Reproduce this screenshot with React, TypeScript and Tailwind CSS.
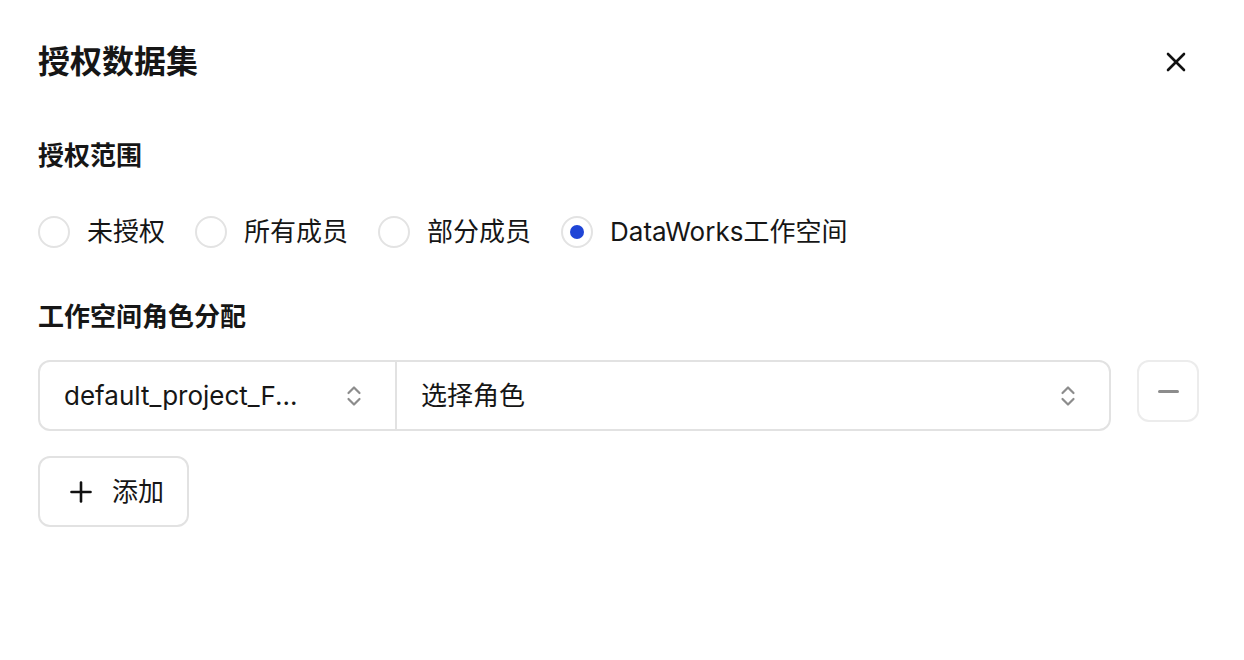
import React, { useState } from 'react';

const font = 'font-["Inter","Noto_Sans_CJK_SC",sans-serif]';

const OPTIONS = [
  { id: 'none', label: '未授权' },
  { id: 'all', label: '所有成员' },
  { id: 'some', label: '部分成员' },
  { id: 'dw', label: 'DataWorks工作空间' },
];

function UpDown() {
  return (
    <svg width="16" height="24" viewBox="0 0 16 24" fill="none" stroke="#8c8c8c" strokeWidth="2.2" strokeLinecap="round" strokeLinejoin="round">
      <polyline points="2.5,9 8,3.5 13.5,9" />
      <polyline points="2.5,15 8,20.5 13.5,15" />
    </svg>
  );
}

export default function App() {
  const [scope, setScope] = useState('dw');

  return (
    <div className={`w-[1244px] h-[660px] bg-white pl-[38px] pr-[45px] pt-[42px] text-[#161616] ${font}`}>
      {/* header */}
      <header className="flex items-center justify-between">
        <h1 className="text-[32px] leading-[40px] font-bold">授权数据集</h1>
        <button className="w-10 h-10 flex items-center justify-center mr-[3px]">
          <svg width="20" height="20" viewBox="0 0 20 20" stroke="#111" strokeWidth="2.6" strokeLinecap="round">
            <line x1="2" y1="2" x2="18" y2="18" />
            <line x1="18" y1="2" x2="2" y2="18" />
          </svg>
        </button>
      </header>

      {/* scope */}
      <h2 className="mt-[56px] text-[26px] leading-[36px] font-semibold">授权范围</h2>
      <div className="mt-[42px] flex items-center gap-[30px]">
        {OPTIONS.map((o) => (
          <label key={o.id} className="flex items-center gap-[17px] cursor-pointer" onClick={() => setScope(o.id)}>
            <span className="w-8 h-8 rounded-full border-2 border-[#e3e3e3] flex items-center justify-center">
              {scope === o.id && <span className="w-[14px] h-[14px] rounded-full bg-[#1f45d6]" />}
            </span>
            <span className="text-[26px] leading-[32px]">{o.label}</span>
          </label>
        ))}
      </div>

      {/* roles */}
      <h2 className="mt-[51px] text-[26px] leading-[36px] font-semibold">工作空间角色分配</h2>
      <div className="mt-[25px] flex items-start gap-[26px]">
        <div className="flex-1 h-[71px] flex border-2 border-[#e2e2e2] rounded-[12px]">
          <div className="w-[357px] flex items-center justify-between pl-[24px] pr-[33px] border-r-2 border-[#e2e2e2]">
            <span className="text-[26px] leading-[32px]">default_project_F...</span>
            <UpDown />
          </div>
          <div className="flex-1 flex items-center justify-between pl-[24px] pr-[33px]">
            <span className="text-[26px] leading-[32px]">选择角色</span>
            <UpDown />
          </div>
        </div>
        <button className="w-[62px] h-[62px] rounded-[12px] border-2 border-[#ececec] flex items-center justify-center">
          <span className="w-[21px] h-[3px] rounded-full bg-[#8c8c8c]" />
        </button>
      </div>

      <button className="mt-[25px] h-[71px] w-[151px] rounded-[12px] border-2 border-[#e2e2e2] flex items-center pl-[30px] gap-[20px]">
        <svg width="22" height="22" viewBox="0 0 22 22" stroke="#111" strokeWidth="2.6" strokeLinecap="round">
          <line x1="11" y1="1.5" x2="11" y2="20.5" />
          <line x1="1.5" y1="11" x2="20.5" y2="11" />
        </svg>
        <span className="text-[26px] leading-[32px]">添加</span>
      </button>
    </div>
  );
}
